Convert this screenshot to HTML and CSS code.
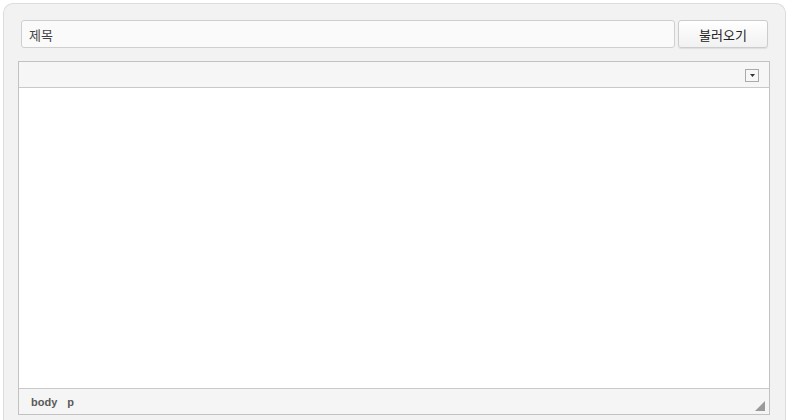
FILE: index.html
```html
<!DOCTYPE html>
<html lang="ko">
<head>
<meta charset="utf-8">
<title>Editor</title>
<link rel="stylesheet" href="styles.css">
</head>
<body>
<div class="panel">
  <div class="title-row">
    <input class="title-input" type="text" value="제목">
    <button class="load-btn" type="button">불러오기</button>
  </div>
  <div class="editor">
    <div class="toolbar">
      <span class="combo"><svg width="5" height="3" viewBox="0 0 5 3"><path d="M0 0H5L2.5 3Z" fill="#333"/></svg></span>
    </div>
    <div class="content"></div>
    <div class="statusbar">
      <span class="path">body</span>
      <span class="path">p</span>
      <span class="resize"></span>
    </div>
  </div>
</div>
</body>
</html>
```
FILE: styles.css
```css
html, body {
  margin: 0;
  padding: 0;
  background: #ffffff;
  overflow: hidden;
}
body {
  padding: 3px 0 0 3px;
  height: 417px;
  font-family: "Noto Sans CJK KR", "Liberation Sans", sans-serif;
}
.panel {
  width: 752px;
  height: 400px;
  box-sizing: content-box;
  background: #f2f2f2;
  border: 1px solid #dcdcdc;
  border-bottom: none;
  border-radius: 10px 10px 0 0;
  padding: 16px 15px 0 14px;
  overflow: hidden;
}
.title-row {
  display: flex;
  gap: 3px;
  margin: 0 2px 0 3px;
  height: 28px;
}
.title-input {
  flex: 1;
  min-width: 0;
  box-sizing: border-box;
  height: 28px;
  margin: 0;
  border: 1px solid #cfcfcf;
  border-radius: 3px;
  background: #fafafa;
  padding: 0 7px;
  font-family: "Noto Sans CJK KR", "Liberation Sans", sans-serif;
  font-size: 13px;
  color: #444;
  outline: none;
}
.load-btn {
  width: 90px;
  box-sizing: border-box;
  height: 28px;
  margin: 0;
  border: 1px solid #cccccc;
  border-radius: 3px;
  background: linear-gradient(#ffffff, #f1f1f1);
  box-shadow: 0 1px 1px rgba(0,0,0,0.08);
  font-family: "Noto Sans CJK KR", "Liberation Sans", sans-serif;
  font-size: 13px;
  color: #222;
  padding: 0;
}
.editor {
  margin-top: 13px;
  border: 1px solid #c2c2c2;
  background: #ffffff;
  display: flex;
  flex-direction: column;
}
.toolbar {
  height: 25px;
  background: #f5f6f5;
  border-bottom: 1px solid #c9c9c9;
  display: flex;
  align-items: center;
  justify-content: flex-end;
  padding-right: 10px;
}
.combo {
  width: 12px;
  height: 11px;
  border: 1px solid #aaaaaa;
  background: #f7f7f7;
  display: flex;
  align-items: center;
  justify-content: center;
  margin-top: 1px;
}
.combo svg {
  display: block;
}
.content {
  height: 300px;
  background: #ffffff;
}
.statusbar {
  position: relative;
  height: 25px;
  background: #f4f5f4;
  border-top: 1px solid #c9c9c9;
  display: flex;
  align-items: center;
  gap: 10px;
  padding-left: 12px;
  font-family: "Liberation Sans", Arial, sans-serif;
  font-size: 11px;
  font-weight: bold;
  color: #5a5a5a;
}
.path {
  line-height: 1;
  margin-top: 1px;
}
.resize {
  position: absolute;
  right: 4px;
  bottom: 3px;
  width: 0;
  height: 0;
  border-style: solid;
  border-width: 0 0 10px 10px;
  border-color: transparent transparent #9a9a9a transparent;
}
```
